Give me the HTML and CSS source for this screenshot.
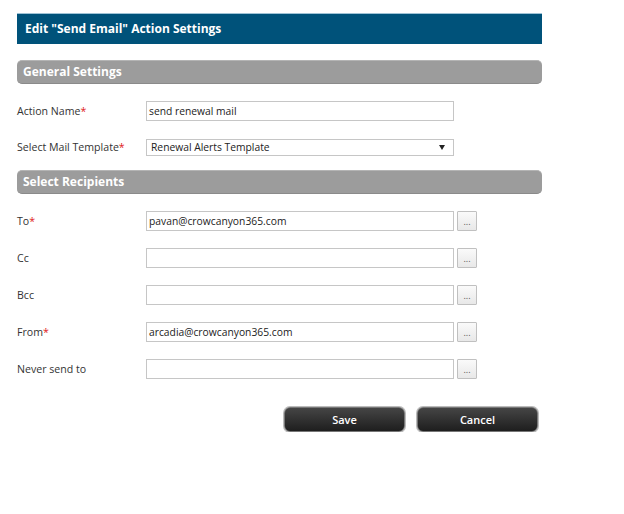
FILE: index.html
```html
<!DOCTYPE html>
<html>
<head>
<meta charset="utf-8">
<link rel="stylesheet" href="styles.css">
</head>
<body>
<div class="dialog">
  <div class="title">Edit "Send Email" Action Settings</div>
  <div class="section">General Settings</div>
  <div class="rows general">
    <div class="row">
      <label class="lbl">Action Name<span class="req">*</span></label>
      <div class="field"><span class="input">send renewal mail</span></div>
    </div>
    <div class="row row-select">
      <label class="lbl">Select Mail Template<span class="req">*</span></label>
      <div class="field"><span class="input select">Renewal Alerts Template<span class="arrow"></span></span></div>
    </div>
  </div>
  <div class="section section-recip">Select Recipients</div>
  <div class="rows recip">
    <div class="row">
      <label class="lbl">To<span class="req">*</span></label>
      <div class="field"><span class="input">pavan@crowcanyon365.com</span><span class="dots">...</span></div>
    </div>
    <div class="row">
      <label class="lbl">Cc</label>
      <div class="field"><span class="input"></span><span class="dots">...</span></div>
    </div>
    <div class="row">
      <label class="lbl">Bcc</label>
      <div class="field"><span class="input"></span><span class="dots">...</span></div>
    </div>
    <div class="row">
      <label class="lbl">From<span class="req">*</span></label>
      <div class="field"><span class="input">arcadia@crowcanyon365.com</span><span class="dots">...</span></div>
    </div>
    <div class="row">
      <label class="lbl">Never send to</label>
      <div class="field"><span class="input"></span><span class="dots">...</span></div>
    </div>
  </div>
  <div class="actions">
    <button class="btn">Save</button>
    <button class="btn">Cancel</button>
  </div>
</div>
</body>
</html>
```
FILE: styles.css
```css
html, body { margin: 0; padding: 0; background: #fff; }
body { font-family: "Open Sans", "Noto Sans", sans-serif; color: #333; }
.dialog { width: 525px; margin-left: 17px; padding-top: 13px; }
.title {
  height: 31px; box-sizing: border-box;
  background: #00527a; border-top: 1px solid #9fc3d6;
  color: #fff; font-weight: 700; font-size: 12px;
  padding-left: 8px; line-height: 30px;
}
.section {
  margin-top: 16px; height: 24px; box-sizing: border-box;
  background: #9c9c9c; border-radius: 5px;
  border-top: 1px solid #b4b4b4; border-bottom: 1px solid #8a8a8a;
  color: #fff; font-weight: 700; font-size: 12px;
  padding-left: 6px; line-height: 21px;
}
.section-recip { margin-top: 13px; }
.rows { display: flex; flex-direction: column; }
.general { padding-top: 17px; gap: 16px; }
.row-select { height: 17px; }
.row-select .input { height: 17px; }
.recip { padding-top: 17px; gap: 17px; }
.row { display: flex; align-items: center; height: 20px; }
.lbl { width: 129px; font-size: 10.6px; color: #333; }
.req { color: #e02020; }
.field { display: flex; align-items: center; gap: 3px; }
.input {
  position: relative;
  width: 308px; height: 20px; box-sizing: border-box;
  border: 1px solid #c6c6c6; background: #fff;
  font-size: 10.3px; color: #222; padding-left: 2px;
  display: flex; align-items: center;
}
.select { padding-left: 4px; }
.arrow {
  position: absolute; right: 8px; top: 5px;
  border-left: 3px solid transparent; border-right: 3px solid transparent;
  border-top: 5px solid #222;
}
.dots {
  width: 20px; height: 20px; box-sizing: border-box;
  border: 1px solid #c0c0c0; background: linear-gradient(#fafafa, #e8e8e8);
  font-size: 9px; color: #555; text-align: center; line-height: 20px;
  border-radius: 1px;
}
.actions { display: flex; justify-content: flex-end; gap: 12px; margin-top: 28px; padding-right: 4px; }
.btn {
  width: 121px; height: 25px; box-sizing: border-box;
  background: linear-gradient(#454545, #1e1e1e);
  border: 1px solid #777; border-radius: 6px;
  box-shadow: 0 0 0 1px #bbb;
  color: #fff; font-family: "Open Sans", sans-serif; font-size: 11px; font-weight: 600;
  padding: 0;
}
```
